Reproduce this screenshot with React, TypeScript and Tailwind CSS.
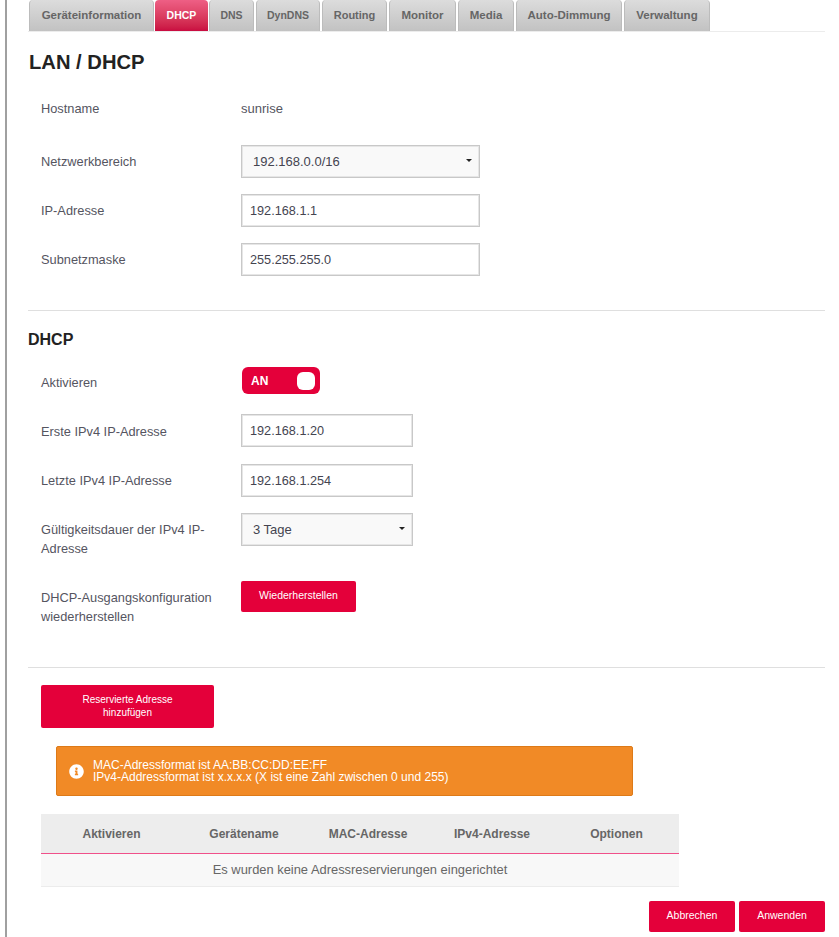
import React from 'react';
import { FaInfoCircle } from 'react-icons/fa';

const tabs = [
  { label: 'Geräteinformation', width: 'w-[125px]', gap: 'mr-[1px]', size: 'text-[11.5px]' },
  { label: 'DHCP', width: 'w-[53px]', gap: 'mr-[1px]', size: 'text-[10.5px]', active: true },
  { label: 'DNS', width: 'w-[45px]', gap: 'mr-[2px]', size: 'text-[10.5px]' },
  { label: 'DynDNS', width: 'w-[64px]', gap: 'mr-[2px]', size: 'text-[10.5px]' },
  { label: 'Routing', width: 'w-[65px]', gap: 'mr-[2px]', size: 'text-[11px]' },
  { label: 'Monitor', width: 'w-[67px]', gap: 'mr-[2px]', size: 'text-[11.5px]' },
  { label: 'Media', width: 'w-[56px]', gap: 'mr-[2px]', size: 'text-[11.5px]' },
  { label: 'Auto-Dimmung', width: 'w-[106px]', gap: 'mr-[2px]', size: 'text-[11.5px]' },
  { label: 'Verwaltung', width: 'w-[86px]', gap: '', size: 'text-[11.5px]' },
];

const columns = ['Aktivieren', 'Gerätename', 'MAC-Adresse', 'IPv4-Adresse', 'Optionen'];

function Label({ children }: { children: React.ReactNode }) {
  return <div className="w-[200px] shrink-0 text-[12.8px] leading-[19px] text-[#55555f]">{children}</div>;
}

function TextInput({ value, width }: { value: string; width: string }) {
  return (
    <input
      readOnly
      value={value}
      className={`${width} h-[33px] border border-[#c8c8c8] bg-white px-[8px] text-[12.7px] text-[#444450] shadow-[inset_0_0_0_1px_#e6e6e6] outline-none`}
    />
  );
}

function SelectBox({ value, width }: { value: string; width: string }) {
  return (
    <div className={`${width} flex h-[33px] items-center justify-between border border-[#c8c8c8] bg-[#f9f9f9] pl-[11px] pr-[7px] text-[13px] text-[#444450] shadow-[inset_0_0_0_1px_#e6e6e6]`}>
      <span>{value}</span>
      <span className="mb-[2px] h-0 w-0 border-x-[3px] border-t-[3px] border-x-transparent border-t-[#222]" />
    </div>
  );
}

function RedButton({ children, className }: { children: React.ReactNode; className: string }) {
  return (
    <button className={`${className} rounded-[2px] bg-[#e4003a] pb-[2px] text-center leading-[13px] text-white`}>
      {children}
    </button>
  );
}

export default function App() {
  return (
    <div className="h-[937px] w-[839px] overflow-hidden bg-white font-['Liberation_Sans',Arial,sans-serif]">
      <div className="ml-[5px] h-full w-[820px] border-l-2 border-[#a0a0a0] pl-[21px]">
        {/* Tabs */}
        <div className="flex h-[32px] border-b border-[#ececec] pl-[1px]">
          {tabs.map((tab) => (
            <div
              key={tab.label}
              className={`${tab.width} ${tab.gap} ${tab.size} flex h-[31px] items-center justify-center rounded-t-[4px] font-bold ${
                tab.active
                  ? 'bg-gradient-to-b from-[#ee5f85] to-[#c90a40] text-white'
                  : 'border-x border-[#bcbcbc] bg-gradient-to-b from-[#dcdcdc] to-[#c2c2c2] text-[#666666]'
              }`}
            >
              {tab.label}
            </div>
          ))}
        </div>

        <h1 className="mt-[18px] pl-[1px] text-[20.2px] font-bold leading-[24px] text-[#222222]">LAN / DHCP</h1>

        {/* LAN */}
        <div className="pl-[13px]">
          <div className="mt-[25px] flex h-[19px] items-center">
            <Label>Hostname</Label>
            <span className="text-[13px] text-[#55555f]">sunrise</span>
          </div>
          <div className="mt-[27px] flex items-center">
            <Label>Netzwerkbereich</Label>
            <SelectBox value="192.168.0.0/16" width="w-[239px]" />
          </div>
          <div className="mt-[16px] flex items-center">
            <Label>IP-Adresse</Label>
            <TextInput value="192.168.1.1" width="w-[239px]" />
          </div>
          <div className="mt-[16px] flex items-center">
            <Label>Subnetzmaske</Label>
            <TextInput value="255.255.255.0" width="w-[239px]" />
          </div>
        </div>

        <div className="mt-[34px] h-px bg-[#dfdfdf]" />

        {/* DHCP */}
        <h2 className="mt-[20px] text-[16px] font-bold leading-[18px] text-[#222222]">DHCP</h2>
        <div className="pl-[13px]">
          <div className="mt-[18px] flex h-[27px] items-center">
            <div className="pt-[3px]">
              <Label>Aktivieren</Label>
            </div>
            <div className="ml-[1px] flex h-[27px] w-[78px] items-center justify-between rounded-[6px] bg-[#e4003a] pl-[9px] pr-[5px]">
              <span className="text-[12px] font-bold text-white">AN</span>
              <span className="h-[18px] w-[18px] rounded-[6px] bg-white" />
            </div>
          </div>
          <div className="mt-[20px] flex items-center">
            <div className="pt-[1px]">
              <Label>Erste IPv4 IP-Adresse</Label>
            </div>
            <TextInput value="192.168.1.20" width="w-[172px]" />
          </div>
          <div className="mt-[17px] flex items-center">
            <Label>Letzte IPv4 IP-Adresse</Label>
            <TextInput value="192.168.1.254" width="w-[172px]" />
          </div>
          <div className="mt-[16px] flex items-start">
            <div className="pt-[7px]">
              <Label>Gültigkeitsdauer der IPv4 IP-Adresse</Label>
            </div>
            <SelectBox value="3 Tage" width="w-[172px]" />
          </div>
          <div className="mt-[23px] flex items-start">
            <div className="pt-[7px]">
              <Label>DHCP-Ausgangskonfiguration wiederherstellen</Label>
            </div>
            <RedButton className="h-[31px] w-[115px] text-[10.5px]">Wiederherstellen</RedButton>
          </div>
        </div>

        <div className="mt-[41px] h-px bg-[#dfdfdf]" />

        {/* Reservierungen */}
        <div className="pl-[13px]">
          <RedButton className="mt-[17px] block h-[43px] w-[173px] text-[10px]">
            Reservierte Adresse
            <br />
            hinzufügen
          </RedButton>

          <div className="ml-[15px] mt-[18px] flex h-[50px] w-[577px] items-center rounded-[2px] border border-[#dd7a18] bg-[#f18a26] pl-[12px] text-[12px] leading-[12px] text-white">
            <FaInfoCircle className="mr-[9px] h-[15px] w-[15px] shrink-0" />
            <div>
              MAC-Adressformat ist AA:BB:CC:DD:EE:FF
              <br />
              IPv4-Addressformat ist x.x.x.x (X ist eine Zahl zwischen 0 und 255)
            </div>
          </div>

          <div className="mt-[18px] w-[638px]">
            <div className="flex h-[40px] items-center border-b border-[#f0508a] bg-[#ededed] text-[12px] font-bold text-[#666666]">
              <div className="w-[141px] text-center">{columns[0]}</div>
              <div className="w-[124px] text-center">{columns[1]}</div>
              <div className="w-[124px] text-center">{columns[2]}</div>
              <div className="w-[124px] text-center">{columns[3]}</div>
              <div className="w-[125px] text-center">{columns[4]}</div>
            </div>
            <div className="flex h-[33px] items-center justify-center border-b border-[#ececec] bg-[#f8f8f8] text-[12.9px] text-[#666666]">
              Es wurden keine Adressreservierungen eingerichtet
            </div>
          </div>
        </div>

        <div className="mt-[14px] flex justify-end gap-[4px]">
          <RedButton className="h-[31px] w-[86px] text-[10.5px]">Abbrechen</RedButton>
          <RedButton className="h-[31px] w-[86px] text-[10.5px]">Anwenden</RedButton>
        </div>
      </div>
    </div>
  );
}
